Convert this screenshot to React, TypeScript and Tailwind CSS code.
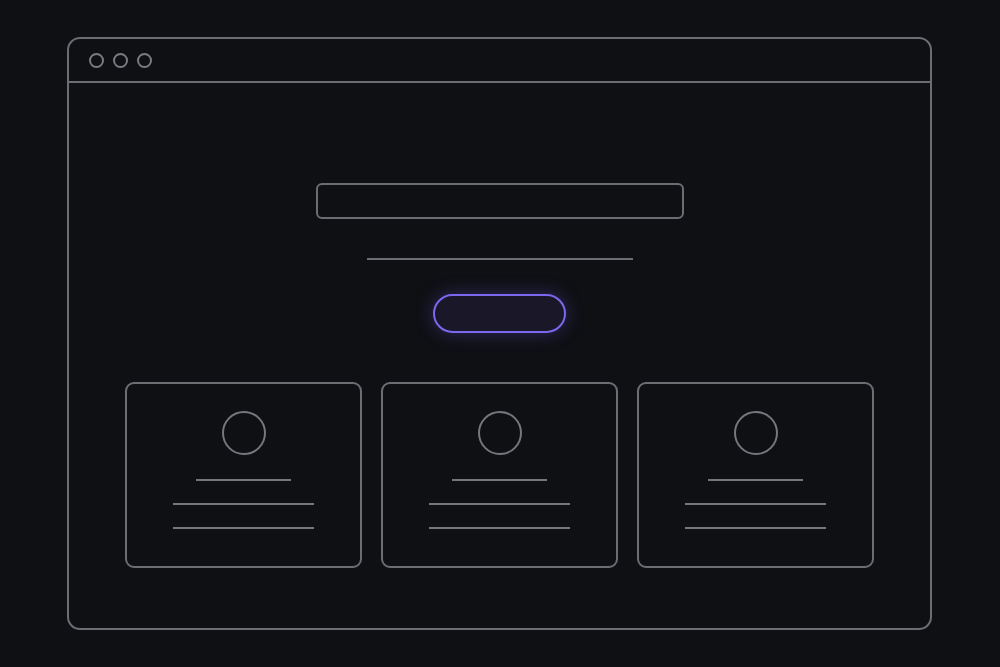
import React from "react";

const Card = () => (
  <div className="h-[186px] rounded-[9px] border-2 border-[#6c6d73] flex flex-col items-center pt-[27px]">
    <div className="w-[44px] h-[44px] rounded-full border-2 border-[#76777c]" />
    <div className="mt-[24px] h-[2px] w-[95px] bg-[#76777c]" />
    <div className="mt-[22px] h-[2px] w-[141px] bg-[#76777c]" />
    <div className="mt-[22px] h-[2px] w-[141px] bg-[#76777c]" />
  </div>
);

export default function App() {
  return (
    <div className="w-[1000px] h-[667px] bg-[#0f1014] pt-[37px] pl-[67px] overflow-hidden">
      <div className="w-[865px] h-[593px] rounded-[13px] border-2 border-[#6c6d73] flex flex-col">
        <div className="h-[44px] border-b-2 border-[#6c6d73] flex items-center gap-[9px] pl-[20px]">
          <div className="w-[15px] h-[15px] rounded-full border-2 border-[#7a7b80]" />
          <div className="w-[15px] h-[15px] rounded-full border-2 border-[#7a7b80]" />
          <div className="w-[15px] h-[15px] rounded-full border-2 border-[#7a7b80]" />
        </div>
        <div className="flex flex-col items-center pt-[100px]">
          <div className="w-[368px] h-[36px] rounded-[6px] border-2 border-[#6c6d73]" />
          <div className="mt-[39px] h-[2px] w-[266px] bg-[#6c6d73]" />
          <div className="mt-[34px] w-[133px] h-[39px] rounded-full border-2 border-[#7b68ee] bg-[#1a1729] shadow-[0_0_18px_rgba(110,90,230,0.35)]" />
          <div className="mt-[49px] grid grid-cols-[237px_237px_237px] gap-[19px]">
            <Card />
            <Card />
            <Card />
          </div>
        </div>
      </div>
    </div>
  );
}
